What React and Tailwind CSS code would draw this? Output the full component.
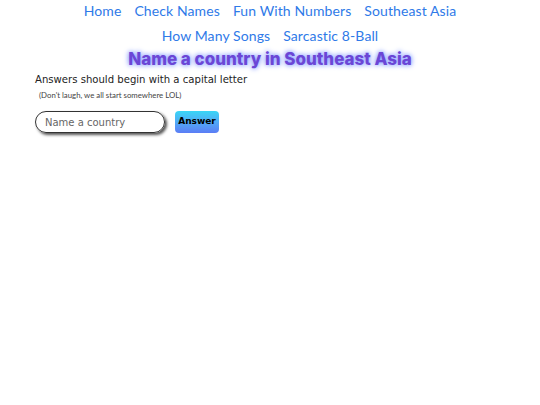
import React from 'react';

const links = ['Home', 'Check Names', 'Fun With Numbers', 'Southeast Asia', 'How Many Songs', 'Sarcastic 8-Ball'];

export default function App() {
  return (
    <div className="min-h-screen bg-white font-['DejaVu_Sans',sans-serif]">
      <nav className="-mt-[2px] flex flex-wrap justify-center gap-x-[13px] px-[70px] font-['Lato',sans-serif] text-[14px] leading-[25px] text-[#2f7ae8]">
        {links.map((l) => (
          <a key={l} href="#" className="tracking-[0.1px]">
            {l}
          </a>
        ))}
      </nav>
      <h1 className="text-center font-['Inter',sans-serif] text-[17px] font-extrabold leading-[22px] text-[#6b46d6] [text-shadow:0_0_4px_#8aa0ff,0_0_6px_#a5b4fc]">
        Name a country in Southeast Asia
      </h1>
      <div className="px-[35px]">
        <p className="mt-[2px] text-[10.1px] leading-[16px] text-[#222]">Answers should begin with a capital letter</p>
        <p className="mt-[1px] pl-[4px] font-['Lato',sans-serif] text-[7.8px] leading-[12px] text-[#444]">
          (Don't laugh, we all start somewhere LOL)
        </p>
        <div className="mt-[10px] flex items-center gap-[10px]">
          <input
            placeholder="Name a country"
            className="h-[22px] w-[130px] rounded-full border border-[#333] px-[9px] text-[10px] text-[#333] shadow-[2px_2px_3px_#555] outline-none placeholder:text-[#666]"
          />
          <button className="h-[22px] w-[44px] rounded-[4px] bg-gradient-to-b from-[#38d6f5] to-[#5b7cf5] text-[9px] font-bold text-black">
            Answer
          </button>
        </div>
      </div>
    </div>
  );
}
